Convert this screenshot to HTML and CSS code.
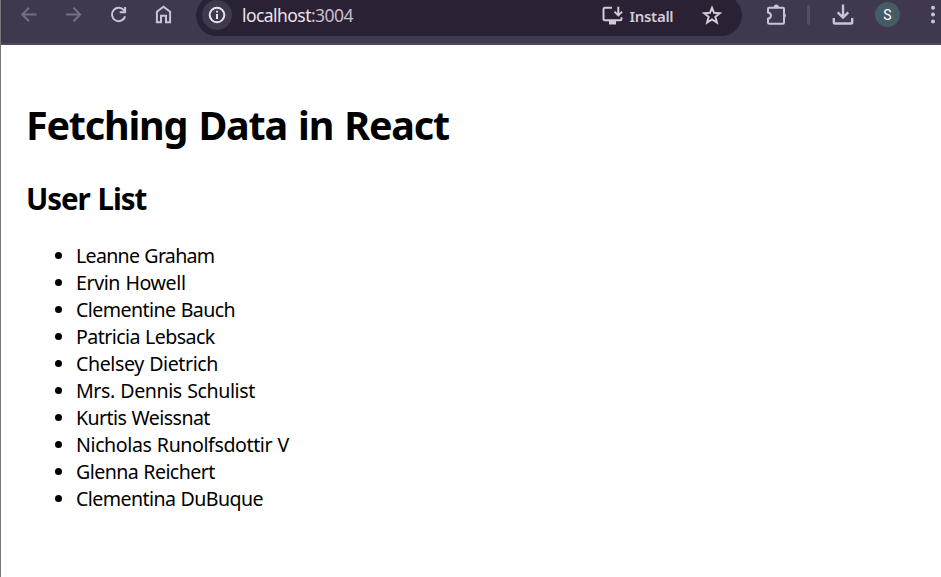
FILE: index.html
```html
<!DOCTYPE html>
<html lang="en">
<head>
<meta charset="utf-8">
<title>Fetching Data in React</title>
<link rel="stylesheet" href="styles.css">
</head>
<body>
<div class="window">
  <header class="toolbar">
    <nav class="nav">
      <svg class="icon dim" viewBox="0 0 30 30"><path d="M22.5 14.5H8.5M15 7.8L8.3 14.5L15 21.2"/></svg>
      <svg class="icon dim" viewBox="0 0 30 30"><path d="M7 14.5H21M14.5 7.8L21.2 14.5L14.5 21.2"/></svg>
      <svg class="icon" viewBox="0 0 30 30"><path d="M20.3 10.8A6.7 6.7 0 1 0 21.1 16.4M21.1 7V12.2H15.7"/></svg>
      <svg class="icon" viewBox="0 0 30 30"><path d="M7.9 22.3V11.8L14.5 6.8L21.1 11.8V22.3H17V15.8H12V22.3Z"/></svg>
    </nav>
    <div class="omnibox">
      <span class="info"><svg class="icon" viewBox="0 0 30 30"><circle cx="15" cy="15" r="7.3"/><path d="M15 14V19M15 10.8V12.6"/></svg></span>
      <span class="url">localhost<span class="port">:3004</span></span>
      <svg class="icon install-icon" viewBox="0 0 30 30"><path d="M14 7.7H7Q5.5 7.7 5.5 9.2V18.8Q5.5 20.3 7 20.3H22Q23.5 20.3 23.5 18.8V17.3M20.3 6.8V15M16.5 11.6L20.3 15.4L24.1 11.6"/><path class="solid" d="M11 20H18V24.5H11Z"/></svg>
      <span class="install">Install</span>
      <svg class="icon star" viewBox="0 0 30 30"><path d="M15 7.8L17.1 12.8L22.8 13.2L18.4 16.8L19.9 22.5L15 19.5L10.1 22.5L11.6 16.8L7.2 13.2L12.9 12.8Z"/></svg>
    </div>
    <svg class="icon puzzle" viewBox="0 0 30 30"><path d="M7.2 7.7H21Q22 7.7 22 8.7V22.5Q22 23.7 21 23.7H7.2Q6 23.7 6 22.5V18.8C10 18 10 13.2 6 12.4V8.7Q6 7.7 7.2 7.7Z"/><path class="solid" d="M11.7 7.5A2.6 2.9 0 0 1 16.9 7.5ZM22 13A2.7 2.7 0 0 1 22 18.2Z"/></svg>
    <span class="divider"></span>
    <svg class="icon download" viewBox="0 0 30 30"><path d="M15 4.5V17M9.7 12.3L15 17.6L20.3 12.3M5.8 18V22.2Q5.8 23.5 7.1 23.5H22.9Q24.2 23.5 24.2 22.2V18"/></svg>
    <span class="avatar">S</span>
    <svg class="menu" viewBox="0 0 6 30"><circle cx="3" cy="7.7" r="2"/><circle cx="3" cy="14.6" r="2"/><circle cx="3" cy="21.4" r="2"/></svg>
  </header>
  <main class="page">
    <h1>Fetching Data in React</h1>
    <h2>User List</h2>
    <ul>
      <li class="tight">Leanne Graham</li>
      <li class="loose">Ervin Howell</li>
      <li>Clementine Bauch</li>
      <li>Patricia Lebsack</li>
      <li class="loose">Chelsey Dietrich</li>
      <li class="loose">Mrs. Dennis Schulist</li>
      <li>Kurtis Weissnat</li>
      <li class="loose">Nicholas Runolfsdottir V</li>
      <li>Glenna Reichert</li>
      <li>Clementina DuBuque</li>
    </ul>
  </main>
</div>
</body>
</html>
```
FILE: styles.css
```css
* { box-sizing: border-box; }
body { margin: 0; overflow: hidden; background: #fff; color: #000; font-family: "Segoe UI", "Noto Sans", sans-serif; }
.window { height: 577px; border-left: 1px solid #777; }
.toolbar { display: flex; align-items: flex-start; height: 45px; background: #40384c; border-bottom: 2px solid #50495a; overflow: hidden; }
.nav { display: flex; gap: 15px; margin-left: 13px; }
.icon { display: block; flex: none; width: 30px; height: 30px; fill: none; stroke: #cbc1da; stroke-width: 2; }
.dim { stroke: #786e84; }
.icon .solid { fill: currentColor; stroke: none; }
.omnibox { display: flex; align-items: flex-start; flex: none; width: 546px; height: 41px; margin: -5px 0 0 17px; padding-top: 5px; border-radius: 21px; background: #2a2234; color: #d2cad6; }
.omnibox .icon { stroke: #d2cad6; }
.info { margin-left: 6px; width: 30px; height: 30px; border-radius: 50%; background: #40384c; }
.info .icon { stroke: #ebe3ee; }
.url { margin-left: 10px; width: 355px; line-height: 30px; font-size: 17.5px; letter-spacing: -.56px; color: #e9e1ed; white-space: nowrap; }
.port { color: #c8bfcc; }
.install-icon { margin-left: 1px; }
.install { width: 46px; margin-left: 1.5px; line-height: 30px; padding-top: 1px; font-size: 15px; font-weight: 600; letter-spacing: -.3px; white-space: nowrap; }
.star { margin-left: 21.5px; }
.puzzle, .download { color: #cbc1da; }
.puzzle { margin-left: 20px; }
.divider { flex: none; width: 3px; height: 20px; margin: 5px 0 0 15px; border-radius: 2px; background: #574e64; }
.download { margin-left: 18px; stroke-width: 2.4; }
.avatar { flex: none; width: 25px; height: 25px; margin: 2px 0 0 17px; border-radius: 50%; background: #455b66; color: #fff; font: 400 14px/26px Roboto, sans-serif; text-align: center; }
.menu { flex: none; width: 6px; height: 30px; margin-left: 29.5px; fill: #cbc1da; }
.page { padding: 53px 25px 0; }
h1 { margin: 0; font-size: 39.5px; line-height: 55px; letter-spacing: -1.2px; word-spacing: 2px; }
h2 { margin: 27px 0 0; font-size: 29.5px; line-height: 38px; letter-spacing: -1.1px; word-spacing: 1.5px; }
ul { margin: 24px 0 0; padding-left: 50px; font-size: 19.6px; line-height: 27px; letter-spacing: -.58px; word-spacing: .7px; }
.tight { letter-spacing: -.72px; }
.loose { letter-spacing: -.41px; }
```
